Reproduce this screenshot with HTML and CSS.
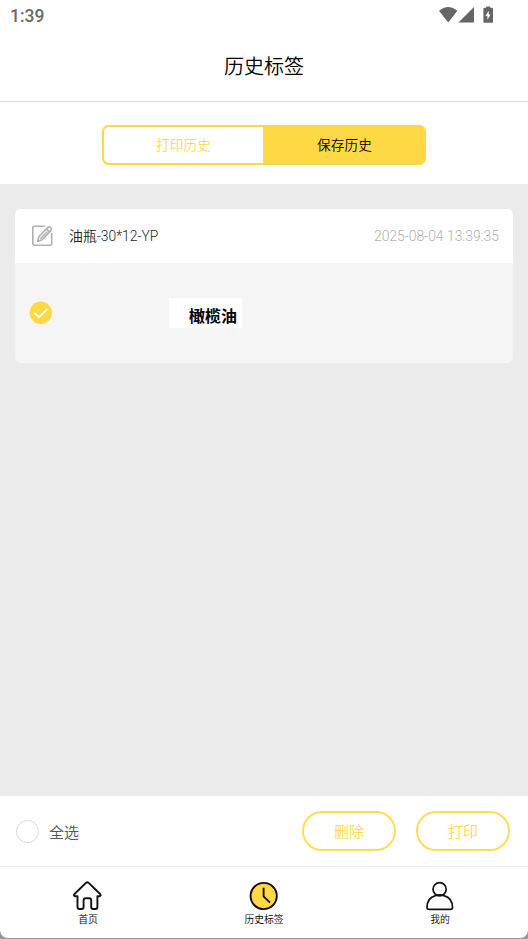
FILE: index.html
```html
<!DOCTYPE html>
<html lang="zh-CN">
<head>
<meta charset="utf-8">
<title>历史标签</title>
<link rel="stylesheet" href="styles.css">
</head>
<body>
<div class="screen">
  <div class="status">
    <span class="clock">1:39</span>
    <svg class="status-icons" width="56" height="18" viewBox="0 0 56 18" fill="#656565">
      <path d="M0 3.800Q9.200-3.800 18.400 3.800L9.200 15.600Z"/>
      <path d="M35 0V15.600H19.500Z"/>
      <path d="M47.200-.5h4v1.300h1.800a1 1 0 0 1 1 1V14.800a1 1 0 0 1-1 1h-7.600a1 1 0 0 1-1-1V1.800a1 1 0 0 1 1-1h1.800Z"/>
      <path d="M49.700 3.800l-3.300 5.200h2v3.800l3.200-5.200h-1.900Z" fill="#fff"/>
    </svg>
  </div>
  <header class="header">历史标签</header>
  <div class="filter">
    <div class="segment">
      <div class="tab">打印历史</div>
      <div class="tab tab-active">保存历史</div>
    </div>
  </div>
  <main class="list">
    <section class="card">
      <div class="card-head">
        <svg class="edit" width="22" height="22" viewBox="0 0 22 22" fill="none" stroke="#b0b0b0" stroke-width="1.600" stroke-linecap="round" stroke-linejoin="round">
          <path d="M12.500 1.200H2.200Q.8 1.200 .8 2.700V18.700Q.8 20.200 2.200 20.200H18.200Q19.700 20.200 19.700 18.700V8.500"/>
          <path d="M5.800 16.200L6.800 11.700L15.700 2.600Q17.300 1.200 18.700 2.500T19 5.600L10.100 14.800ZM14.500 4L17.500 7M8.900 13.200L14.800 7.200"/>
        </svg>
        <span class="name">油瓶-30*12-YP</span>
        <time class="date">2025-08-04 13:39:35</time>
      </div>
      <div class="card-body">
        <svg class="check" width="23" height="23" viewBox="0 0 23 23">
          <circle cx="11.800" cy="11.800" r="11.200" fill="#ffd945"/>
          <path d="M5.300 11.800L10 16.200L18.300 8" fill="none" stroke="#fff" stroke-width="1.700"/>
        </svg>
        <div class="label">橄榄油</div>
      </div>
    </section>
  </main>
  <div class="actions">
    <span class="radio"></span>
    <span class="all">全选</span>
    <div class="pill">删除</div>
    <div class="pill">打印</div>
  </div>
  <nav class="nav">
    <div class="item">
      <svg width="30" height="30" viewBox="0 0 30 30" fill="none" stroke="#111" stroke-width="1.900" stroke-linejoin="round">
        <path d="M12.900 1.900Q14.300 .8 15.700 1.900L27.300 13.200Q28.300 15 26.300 15.300H24.400V26Q24.400 28 22.400 28H20.200Q18.200 28 18.200 26V19.300Q18.200 17.300 16.200 17.300H12.600Q10.600 17.300 10.600 19.300V26Q10.600 28 8.600 28H6.500Q4.500 28 4.500 26V15.300H2.300Q.3 15 1.300 13.200Z"/>
      </svg>
      <span>首页</span>
    </div>
    <div class="item">
      <svg width="30" height="30" viewBox="0 0 30 30" fill="none" stroke="#111" stroke-width="1.900">
        <circle cx="14.700" cy="15" r="13.100" fill="#ffd945"/>
        <path d="M14.600 6.800V15.400L21 21.600"/>
      </svg>
      <span>历史标签</span>
    </div>
    <div class="item">
      <svg width="30" height="30" viewBox="0 0 30 30" fill="none" stroke="#111" stroke-width="1.700" stroke-linejoin="round">
        <circle cx="14.600" cy="8.300" r="6.600"/>
        <path d="M10.500 14.600C5.200 16 2 20.500 2 26.500Q2 28.300 4 28.300H25.500Q27.500 28.300 27.500 26.500C27.500 20.500 24.200 16 18.900 14.600Q14.700 12.900 10.500 14.600"/>
      </svg>
      <span>我的</span>
    </div>
  </nav>
</div>
</body>
</html>
```
FILE: styles.css
```css
* { box-sizing: border-box; }
body {
  margin: 0;
  height: 939px;
  background: #999;
  font-family: Roboto, "Noto Sans CJK SC", sans-serif;
  font-weight: 350;
  overflow: hidden;
}
.screen {
  display: flex;
  flex-direction: column;
  height: 938px;
  background: #fff;
  border-radius: 0 0 8px 8px;
  overflow: hidden;
}
.status {
  display: flex;
  justify-content: space-between;
  height: 30px;
  padding: 7px 33px 0 10px;
}
.status-icons {
  overflow: visible;
}
.clock {
  font-size: 17.500px;
  line-height: 18px;
  font-weight: 500;
  color: #6a6a6a;
}
.header {
  height: 72px;
  padding-top: 2px;
  border-bottom: 1px solid #d9d9d9;
  font-size: 20px;
  line-height: 71px;
  text-align: center;
  color: #000;
}
.filter {
  height: 82px;
  padding-top: 23px;
}
.segment {
  display: flex;
  width: 324px;
  height: 40px;
  margin-left: 102px;
  border: 2px solid #ffd945;
  border-radius: 7px;
  background: #fff;
  box-shadow: 0 0 1px #ddd;
}
.tab {
  width: 159px;
  font-size: 13.700px;
  line-height: 36px;
  text-align: center;
  color: #ffd945;
}
.tab-active {
  width: 161px;
  padding-left: 2px;
  background: #ffd945;
  color: #000;
}
.list {
  flex: 1;
  padding: 25px 15px;
  background: #ebebeb;
}
.card {
  height: 154px;
  border-radius: 6px;
  background: #f5f5f5;
  overflow: hidden;
}
.card-head {
  display: flex;
  align-items: center;
  height: 54px;
  padding: 0 14px 0 17px;
  background: #fff;
}
.edit {
  margin-top: -1px;
}
.name {
  margin: -2px 0 0 15px;
  font-size: 13.900px;
  color: #222;
}
.date {
  margin-left: auto;
  font-size: 13.900px;
  font-weight: 350;
  color: #b0b0b0;
}
.card-body {
  display: flex;
  align-items: center;
  height: 100px;
  padding-left: 14px;
}
.check {
  margin-top: -1px;
}
.label {
  width: 73px;
  height: 30px;
  margin-left: 117px;
  padding-left: 20px;
  background: #fff;
  font-size: 16px;
  line-height: 37px;
  font-weight: 700;
  color: #000;
}
.actions {
  display: flex;
  align-items: center;
  height: 70px;
  padding: 0 18px 0 16px;
}
.radio {
  width: 23px;
  height: 23px;
  border: 1px solid #d8d8d8;
  border-radius: 50%;
}
.all {
  margin: 0 auto 0 10px;
  font-size: 15px;
  color: #555;
}
.pill {
  width: 94px;
  height: 40px;
  margin-left: 20px;
  border: 2px solid #ffdc58;
  border-radius: 20px;
  font-size: 15px;
  line-height: 38px;
  text-align: center;
  color: #ffd945;
}
.nav {
  display: flex;
  height: 72px;
  border-top: 1px solid #eee;
}
.item {
  flex: 1;
  display: flex;
  flex-direction: column;
  align-items: center;
  padding-top: 14px;
  font-size: 9.800px;
  line-height: 17px;
  color: #000;
}
```
